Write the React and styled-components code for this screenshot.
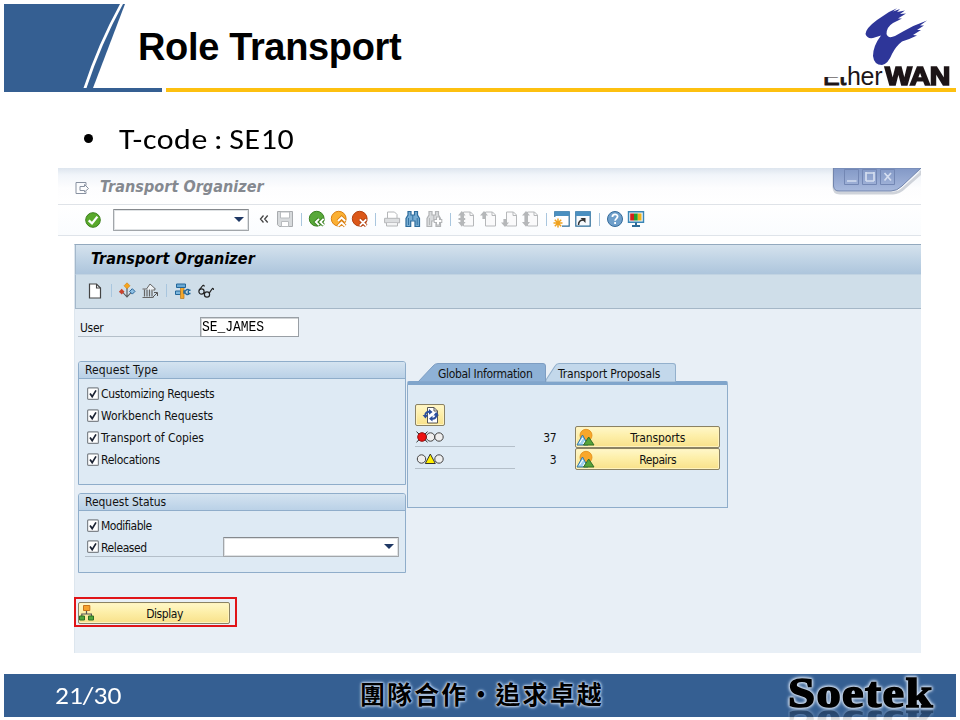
import React from "react";
import styled, { createGlobalStyle } from "styled-components";

const sans = `"DejaVu Sans Condensed", "DejaVu Sans", "Noto Sans", sans-serif`;

const Global = createGlobalStyle`
  * { box-sizing: border-box; }
  body { margin: 0; background: #fff; }
`;

/* ---------- slide ---------- */
const Slide = styled.main`
  width: 960px; height: 720px; overflow: hidden; background: #fff;
  display: flex; flex-direction: column; padding: 4px 4px 0;
`;
const Header = styled.header`
  height: 84px; display: flex; align-items: flex-start;
`;
const Corner = styled.svg`width: 122px; height: 84px; display: block; flex: none;`;
const Title = styled.h1`
  margin: 21px 0 0 12px; flex: 1; font: bold 38px/44px "Liberation Sans", Arial, sans-serif;
  letter-spacing: ${(p) => p.$ls}px; color: #000; white-space: nowrap;
`;
const Brand = styled.div`
  width: 135px; height: 84px; display: flex; flex-direction: column; overflow: visible;
`;
const Brush = styled.svg`width: 70px; height: 60px; margin: 1px 0 -1px 42px; display: block; flex: none;`;
const BrandName = styled.div`
  display: flex; height: 26px; margin-top: -1px; line-height: 26px; color: #1d1517; white-space: nowrap;
  font-family: "Liberation Sans", Arial, sans-serif; font-size: 25px;
`;
const BrandCut = styled.span`
  width: 24px; margin-left: 2px; clip-path: inset(14px 0 0 0); -webkit-text-stroke: 1.1px #1d1517;
  letter-spacing: -.4px;
`;
const BrandThin = styled.span`width: 38px; letter-spacing: -.3px;`;
const BrandHeavy = styled.span`
  font-weight: bold; letter-spacing: -.5px; -webkit-text-stroke: 1.6px #1d1517;
  transform: scaleX(1.14); transform-origin: left;
`;
const Rule = styled.div`
  height: 4px; display: grid; grid-template-columns: 158px 790px; gap: 4px; flex: none;
`;
const RuleBar = styled.div`background: ${(p) => p.$c};`;
const Bullet = styled.div`
  height: 76px; flex: none; display: flex; align-items: center; gap: 26px; padding: 17px 0 0 80px;
  font: 29px/34px Carlito, Lato, sans-serif; color: #000;
`;
const Dot = styled.i`width: 9px; height: 9px; border-radius: 50%; background: #000; margin-top: -1px;`;
const BulletText = styled.span`
  white-space: nowrap; letter-spacing: ${(p) => p.$ls}px; word-spacing: -1.4px; transform: scaleX(1.1); transform-origin: left;
`;

/* ---------- window ---------- */
const Win = styled.section`
  margin-left: 54px; width: 863px; height: 485px; flex: none; display: flex; flex-direction: column;
  background: #fff; font-family: ${sans}; font-size: 12px; color: #111;
`;
const TitleBar = styled.div`
  height: 37px; flex: none; display: flex; align-items: flex-start; border-bottom: 1px solid #dfe3e8;
  background: linear-gradient(#dde5ee 0, #f1f5fa 7px, #fdfdfe 20px, #fff);
`;
const MenuIcon = styled.svg`width: 16px; height: 14px; margin: 13px 0 0 16px;`;
const WinTitle = styled.div`
  flex: 1; margin: 9px 0 0 10px; font: italic bold 16px/20px "DejaVu Sans Condensed", sans-serif;
  letter-spacing: .05px; color: #858990; white-space: nowrap;
`;
const WinControls = styled.svg`width: 92px; height: 28px; flex: none; display: block;`;
const Toolbar = styled.div`
  height: 31px; flex: none; display: flex; align-items: center; padding: 0 0 1px 23px;
  border-bottom: 1px solid #dfe4ea; background: linear-gradient(#fff, #fafcfe);
`;
const Slot = styled.div`width: ${(p) => p.$w || 21.3}px; display: flex; justify-content: center; align-items: center;`;
const Sep = styled.i`width: 1px; height: 13px; margin: 0 4.8px; background: #a9c6de; flex: none;`;
const Icon = styled.svg`width: 18px; height: 18px; display: block; flex: none; overflow: visible;`;
const ToolIcons = styled.div`display: flex; align-items: center; padding-bottom: 1px;`;
const Combo = styled.div`
  width: ${(p) => p.$w}px; height: ${(p) => p.$h}px; border: 1px solid #a2a6aa; border-top-color: #85898d;
  box-shadow: inset 0 0 0 1px #dfe2e4;
  border-radius: 1px; background: #fff; display: flex; align-items: center; justify-content: flex-end; padding-right: 4px;
`;
const Arrow = styled.i`
  border: 5px solid transparent; border-top: 5px solid #1f3864; border-bottom: 0;
`;
const Inner = styled.div`
  margin: 8px 0 0 16px; flex: 1; display: flex; flex-direction: column;
  background: #e8eff6; border-top: 1px solid #93a9be; border-left: 1px solid #dde6ee;
`;
const InnerTitle = styled.div`
  height: 30px; flex: none; padding: 3px 0 0 15px; border-left: 1px solid #a4b8cb; border-bottom: 1px solid #c1d3e2;
  background: linear-gradient(#d5e2ed, #c2d5e6 45%, #adc5dc);
  font: italic bold 16px/22px "DejaVu Sans Condensed", sans-serif; letter-spacing: .06px; color: #000; white-space: nowrap;
`;
const AppBar = styled.div`
  height: 34px; flex: none; display: flex; align-items: center; padding: 0 0 2px 8px; background: #cfdee9;
  border-left: 1px solid #a4b8cb; border-bottom: 1px solid #a5b7c7;
`;
const Content = styled.div`flex: 1; padding-left: 3px; display: flex; flex-direction: column; align-items: flex-start;`;
const Line = styled.div`
  width: ${(p) => p.$w}px; border-bottom: 1px solid #b4bfc9; display: flex; align-items: center;
`;
const UserRow = styled.div`height: 20px; margin-top: 8px; display: flex;`;
const UserLabel = styled(Line)`padding: 2px 0 0 2px;`;
const Label = styled.span`white-space: nowrap; letter-spacing: ${(p) => p.$ls ?? -0.3}px; font-size: 12px; line-height: 16px;`;
const Field = styled.div`
  width: 99px; height: 20px; border: 1px solid #999fa5; box-shadow: inset 1px 1px 0 #d0d3d6; background: #fff;
  padding: 1px 0 0 1px; color: #000; white-space: nowrap;
`;
const FieldText = styled.span`
  display: block; font: 13px/17px "Liberation Mono", monospace; transform: scaleY(1.15); transform-origin: center 60%;
  letter-spacing: -.05px;
`;
const Columns = styled.div`
  margin-top: 24px; display: grid; grid-template-columns: 328px 321px; column-gap: 1px; height: 213px;
`;
const Stack = styled.div`display: flex; flex-direction: column; gap: 8px;`;
const Group = styled.div`
  height: ${(p) => p.$h}px; border: 1px solid #8fadca; border-radius: 3px 3px 0 0; background: #deeaf4;
`;
const GroupHead = styled.div`
  height: 17px; padding-left: 6px; border-bottom: 1px solid #8fadca; border-radius: 2px 2px 0 0;
  background: linear-gradient(#d4e3f0, #bad1e7); display: flex; align-items: center; margin-bottom: 3px;
`;
const CheckRow = styled.div`height: 22px; padding-left: 8px; display: flex; align-items: center; gap: 2px;`;
const CheckLabel = styled(Label)`padding-top: 2px;`;
const CheckBox = styled.svg`width: 12px; height: 13px; display: block; flex: none;`;
const CheckLine = styled(Line)`height: 20px; gap: 2px; padding: 1px 0 0 2px;`;
const RelRow = styled.div`height: 21px; padding-left: 6px; display: flex; align-items: center;`;
const TabPane = styled.div`margin-top: 2px; height: 145px; display: flex; flex-direction: column;`;
const Tabs = styled.div`height: 18px; display: flex; padding-left: 11px; flex: none;`;
const Tab = styled.div`
  width: ${(p) => p.$w}px; height: 18px; position: relative; padding-left: ${(p) => p.$pl}px;
  display: flex; align-items: center;
`;
const TabShape = styled.svg`position: absolute; left: 0; top: 0; width: 100%; height: 19px;`;
const TabText = styled(Label)`position: relative; padding-top: 3px;`;
const TabBody = styled.div`
  flex: 1; border: 1px solid #8fadca; border-top: 4px solid #80a5cb; border-radius: 2px 2px 0 0; background: #deeaf4;
  padding: 19px 7px 0 7px; display: flex; flex-direction: column;
`;
const YButton = styled.button`
  width: ${(p) => p.$w}px; height: 22px; padding: 0 0 0 1px; border: 1px solid #8a8264; border-radius: 2px; color: #111;
  background: linear-gradient(#fff7c9, #fdefa9 45%, #f8e18a); display: flex; align-items: center;
  box-shadow: inset 0 0 0 1px #fff3bd; font-family: ${sans};
`;
const BtnText = styled.span`
  flex: 1; text-align: center; font-size: 12px; letter-spacing: ${(p) => p.$ls ?? -0.3}px; padding: 2px 0 0 2px;
`;
const StatRow = styled.div`height: 22px; display: flex; align-items: center;`;
const StatLine = styled(Line)`height: 20px;`;
const Num = styled.span`width: 42px; text-align: right; margin-right: 18px; padding-top: 1px; font-size: 12px; letter-spacing: -.2px;`;
const Lights = styled.svg`width: 30px; height: 14px; display: block;`;
const RedBox = styled.div`
  margin: 23px 0 0 -4px; width: 163px; height: 30px; border: 2px solid #e01418; padding: 3px 0 0 2px;
`;

/* ---------- footer ---------- */
const Footer = styled.footer`
  margin-top: 21px; height: 43px; flex: none; width: 952px; background: #355f92; display: flex; align-items: flex-start;
`;
const PageNo = styled.div`width: 356px; padding: 5px 0 0 51px; font: 23.5px/34px Carlito, Lato, sans-serif; color: #fff;`;
const PageText = styled.span`display: inline-block; transform: scaleX(1.17); transform-origin: left;`;
const Motto = styled.div`
  width: 428px; padding-top: 2px; font: bold 25px/34px "Noto Sans CJK TC", sans-serif; color: #000; letter-spacing: 2.1px;
  text-shadow: 0 0 1px #b3c8e2, 0 0 2px #b3c8e2, 0 0 2px #b3c8e2, 0 0 3px #a6bddb, 0 0 3px #a6bddb, 0 0 4px #8ba9cf;
  white-space: nowrap;
`;
const Soetek = styled.div`
  height: 44px; flex: none; font: bold 43px/40px "Liberation Serif", serif; color: #000; white-space: nowrap;
`;
const SoetekText = styled.div`
  height: 38px; line-height: 37px; -webkit-text-stroke: 1.6px #000; letter-spacing: 1.2px;
  transform: scaleX(${(p) => p.$sx}); transform-origin: left;
  filter: drop-shadow(0 0 1px #d3e0f0) drop-shadow(0 0 1px #c6d6ea) drop-shadow(0 0 1.5px #b4c8e1);
  -webkit-box-reflect: below -6px linear-gradient(transparent 50%, rgba(0, 0, 0, .4));
`;

/* ---------- icons ---------- */
const Ok = () => (
  <Icon viewBox="0 0 18 18"><circle cx="9" cy="9" r="7.3" fill="#59a92b" stroke="#3c7f1c" />
    <path d="M4.7 9.3 8 12.4 13.4 5.6" fill="none" stroke="#fff" strokeWidth="2.3" /></Icon>
);
const Chevrons = () => (
  <Icon viewBox="0 0 18 18"><path d="M7.500 5.500 4.500 9l3 3.500M11.700 5.500 8.700 9l3 3.500" fill="none" stroke="#444" strokeWidth="1.300" /></Icon>
);
const Save = () => (
  <Icon viewBox="0 0 18 18"><path d="M1.500 1.500h15v15H3.300L1.500 14.700z" fill="#d7dadc" stroke="#a8abae" />
    <path d="M4.500 2h9v6h-9zM5.500 11.500h7v5h-7z" fill="#fff" stroke="#b9bcbf" /></Icon>
);
const discMarks = {
  back: "M11 8.800 7.800 12l3.200 3.200M15.600 8.800 12.400 12l3.200 3.200",
  up: "m8 11 3.600-3.500L15.200 11M8 16l3.600-3.500L15.200 16",
  x: "m8.800 9.300 6.400 6.400m0-6.400-6.400 6.400",
};
const Disc = ({ fill, edge, kind }) => (
  <Icon viewBox="0 0 18 18"><circle cx="8.700" cy="8.700" r="7.400" fill={fill} stroke={edge} />
    <path d={discMarks[kind]} fill="none" stroke={edge} strokeWidth="3.600" />
    <path d={discMarks[kind]} fill="none" stroke="#fff" strokeWidth="1.900" /></Icon>
);
const Print = () => (
  <Icon viewBox="0 0 18 18"><path d="M4.500 8V2h7l2.500 2.500V8" fill="#fff" stroke="#b4b6b8" />
    <path d="M1.600 8.300h15v4.500h-15z" fill="#dcdee0" stroke="#b4b6b8" /><path d="M3.500 13v3h11v-3" fill="#f2f3f4" stroke="#b4b6b8" /></Icon>
);
const Binoc = ({ c, f, plus }) => (
  <Icon viewBox="0 0 18 18"><path d="M4 1.500h3V5h3.500V1.500h3V5l2 3.500v8H11v-5.500H6.700v5.500H2v-8L4 5z" fill={f} stroke={c} strokeWidth="1.200" />
    <path d="M4.500 8v7M13.200 8v7M8.800 5v5" stroke={c} strokeWidth=".9" />
    {plus && <path d="M13 6.500v9M8.700 11h8.600" stroke={c} strokeWidth="4" />}
    {plus && <path d="M13 7.500v7M9.700 11h6.600" stroke="#fff" strokeWidth="2" />}</Icon>
);
const PageIcon = ({ kind }) => (
  <Icon viewBox="0 0 18 18"><path d="M6.500 2h7l3 3v11h-10z" fill="#fafafb" stroke="#b6b8ba" /><path d="M13 2v3.500h3.500" fill="none" stroke="#b6b8ba" />
    {kind === "first" && <path d="M4.800 1 1 5.600h2.400V8H1.500v2h1.900v2H1l3.800 4.800L8.600 12H6.200v-2h2V8h-2V5.600h2.400z" fill="#b5b7b9" />}
    {kind === "prev" && <path d="M5 1 1 5.600h2.400V9h3.200V5.600H9z" fill="#b5b7b9" />}
    {kind === "next" && <path d="M5 17 1 12.400h2.400V9h3.200v3.400H9z" fill="#b5b7b9" />}
    {kind === "last" && <path d="M5 1 1 5.600h2.400V12H1l4 4.800L9 12H6.600V5.600H9z" fill="#b5b7b9" />}
  </Icon>
);
const WinNew = () => (
  <Icon viewBox="0 0 18 18"><path d="M1.800 1.800h14.400v14.400H1.800z" fill="#fff" stroke="#2d6c98" strokeWidth="1.200" /><path d="M1.500 1.500h15V6h-15z" fill="#4a8fc0" />
    <path d="M1 7h8v11H1z" fill="#fbfcfe" /><path d="M5 8.500v9M.5 13h9M1.800 9.800l6.400 6.400M8.200 9.800l-6.400 6.400" stroke="#f0a21e" strokeWidth="1.500" /></Icon>
);
const WinShort = () => (
  <Icon viewBox="0 0 18 18"><path d="M1.800 1.800h14.400v14.400H1.800z" fill="#f7fafd" stroke="#2d6c98" strokeWidth="1.200" /><path d="M1.500 1.500h15V6h-15z" fill="#4a8fc0" />
    <path d="M4.500 15c0-3.500 1.500-5 5-5" fill="none" stroke="#333" strokeWidth="1.500" /><path d="M6.500 8h5v5z" fill="#333" /></Icon>
);
const Help = () => (
  <Icon viewBox="0 0 18 18"><circle cx="9" cy="9" r="7.500" fill="#6f9fca" stroke="#356b9a" />
    <path d="M6.400 7c0-3.500 5.200-3.500 5.200-.4 0 2-2.500 2-2.500 4.200M9.100 12v2" fill="none" stroke="#fff" strokeWidth="1.800" /></Icon>
);
const Monitor = () => (
  <Icon viewBox="0 0 18 18"><path d="M1.500 1.800h15v10.400h-15z" fill="#e8f3fa" stroke="#3a86b5" strokeWidth="1.400" />
    <path d="M3.200 3.500H7v7H3.200z" fill="#d2201c" /><path d="M7 3.500h3.800v7H7z" fill="#22a02c" /><path d="M10.800 3.500h3.700v7h-3.700z" fill="#f0b21a" />
    <path d="M9 12.500V15M5 16h8" stroke="#2d6c98" strokeWidth="2" /></Icon>
);
const NewDoc = () => (
  <Icon viewBox="0 0 18 18"><path d="M3.500 2h7l4 4v10h-11z" fill="#fff" stroke="#444" strokeWidth="1.200" /><path d="M10.500 2v4h4" fill="none" stroke="#444" strokeWidth="1.100" /></Icon>
);
const Route = () => (
  <Icon viewBox="0 0 18 18"><path d="M9 6v9M4 9.500l5 5.500 4.500-5" fill="none" stroke="#555" strokeWidth="1.100" />
    <path d="m9 .8 3 3-3 3-3-3z" fill="#f6a51d" stroke="#cf7d10" strokeWidth=".6" /><path d="M3.700 6.800 6.500 9.700l-2.800 2.800L.9 9.700z" fill="#c9432c" />
    <path d="m14.300 6.700 2.700 2.700-2.700 2.700-2.700-2.700z" fill="#8fc0e4" stroke="#28669a" /></Icon>
);
const Bank = () => (
  <Icon viewBox="0 0 18 18"><path d="M1.500 7h4L9 2l5.500 5H13v2" fill="#eef2f5" stroke="#666" />
    <path d="M3.500 7.500v7M6 7.500v7M8.500 7.500v7M11 7.500v7M1.500 15.500h11" stroke="#666" strokeWidth="1.200" /><path d="m12 15 4-4M13 10.500h3.500V14" fill="none" stroke="#555" /></Icon>
);
const Tools = () => (
  <Icon viewBox="0 0 18 18"><path d="M1.500 9h5v3.500h-5z" fill="#7db7dd" stroke="#23679a" />
    <path d="M6.500 2.500H10v14H6.500z" fill="#f3a72c" stroke="#b9771a" strokeWidth=".7" />
    <path d="M2.500 2h9v3.500h-9z" fill="#6aa9d3" stroke="#23679a" /><path d="M16.500 8.300h-2.200v3.200h2.200M15 7.700c-2-.8-3 0-3.500 1.300H10v2h1.500c.5 1.600 2 2 3.500 1.200" fill="none" stroke="#23679a" strokeWidth="1.400" /></Icon>
);
const Glasses = () => (
  <Icon viewBox="0 0 18 18"><g fill="none" stroke="#222" strokeWidth="1.200"><circle cx="4.500" cy="9.500" r="2.600" /><circle cx="10" cy="12.500" r="2.600" />
    <path d="m6.900 10.600 1 .6M2.300 8.200 5.300 4c.8-1.200 2.200-.6 1.800.6M12.200 11.200 15 7c.6-1 1.700-.4 1.400.9" /></g></Icon>
);
const Scenery = () => (
  <Icon viewBox="0 0 18 18"><circle cx="9" cy="7.300" r="6" fill="#f8a72b" stroke="#e18b15" strokeWidth=".8" />
    <path d="M0 17 5.500 7 11 17z" fill="#9ed0ef" stroke="#2e77a8" /><path d="m2.500 15 3.300-5M6 16l2-3" stroke="#fff" />
    <path d="m6.500 17 5.200-8L17 17z" fill="#55a33b" stroke="#336f27" /></Icon>
);
const Tree = () => (
  <Icon viewBox="1 0 18 18"><path d="M7.500 6v4M2.800 13v-3h9.600v3" fill="none" stroke="#555" strokeWidth="1.200" />
    <path d="M4.500 1.500h6.300v5H4.500z" fill="#f6a12c" stroke="#c9741a" /><path d="M.5 12h5v4H.5zM9.500 12h5v4h-5z" fill="#4fa53a" stroke="#2f6f22" /></Icon>
);
const Refresh = () => (
  <Icon viewBox="0 0 18 18"><path d="M5.500 1.500h6.500l3.500 3.500v12h-10z" fill="#fff" stroke="#555" /><path d="M12 1.500V5h3.500" fill="none" stroke="#555" />
    <path d="M3.300 10C3 7.200 4.800 5.600 7.500 5.800M14.200 8.500c.3 2.800-1.500 4.400-4.200 4.200" fill="none" stroke="#2a4f9e" strokeWidth="1.900" />
    <path d="M.6 9h5.600l-2.800 3.600zM17 9.500h-5.600l2.800-3.600zM7 3l3.600 2.900L7 8.700zM10.500 9.800v5.700L7 12.700z" fill="#2a4f9e" /></Icon>
);
const Box = () => (
  <CheckBox viewBox="0 0 12 13"><rect x=".6" y=".9" width="10.800" height="11.500" rx="1" fill="#fff" stroke="#7f858b" strokeWidth="1.200" />
    <path d="M3 6.400 5.200 9.600 9 3.400" fill="none" stroke="#1b2333" strokeWidth="1.700" /></CheckBox>
);

const requestTypes = [
  ["Customizing Requests", -0.32], ["Workbench Requests", -0.06], ["Transport of Copies", -0.06], ["Relocations", -0.3],
];

export default function App() {
  return (
    <Slide>
      <Global />
      <Header>
        <Corner viewBox="0 0 122 84">
          <path d="M0 0H116Q94 40 79.500 84H0z" fill="#355f92" />
          <path d="M121 0 89 84H82.500Q97 40 119 0z" fill="#355f92" />
        </Corner>
        <Title $ls={-0.35}>Role Transport</Title>
        <Brand>
          <Brush viewBox="863 5 70 60">
            <path d="M897 8.300 889 12 877 20Q866 28 865.500 34Q867 39 873 38L881 35.500Q873 46 873 56Q874 65 882 65Q888 64 892 54Q896 46 902 41.500Q910 39 917 35.500L913 35 921 30 917 30 924 25.500 920 25.500 927 20.500Q914 25 903 31.500L895 36Q888 39 886.500 34Q886.500 27 893 23L902 18.500 898 18.500 906 13.500 900 14 905 10.500 897 12 900 9 893 11.500z" fill="#2e3699" />
          </Brush>
          <BrandName><BrandCut>Et</BrandCut><BrandThin>her</BrandThin><BrandHeavy>WAN</BrandHeavy></BrandName>
        </Brand>
      </Header>
      <Rule><RuleBar $c="#355f92" /><RuleBar $c="#fdc010" /></Rule>
      <Bullet><Dot /><BulletText $ls={0.5}>T-code : SE10</BulletText></Bullet>

      <Win>
        <TitleBar>
          <MenuIcon viewBox="0 0 16 14"><path d="M12 4.500V1.500H2v11h10V10.500M6 5.500h4.500V3.500L14.500 7.500l-4 3.500V9.500H6z" fill="none" stroke="#8891a0" /></MenuIcon>
          <WinTitle>Transport Organizer</WinTitle>
          <WinControls viewBox="0 0 92 28">
            <defs><linearGradient id="wc" x2="0" y2="1"><stop stopColor="#8298c6" /><stop offset="1" stopColor="#a8b9dd" /></linearGradient></defs>
            <path d="M5 0V19Q5 25 11 25H64Q70 25 75 20L92 5V3" fill="none" stroke="#cfd3da" strokeWidth="3" />
            <path d="M4.500 0V18Q5 23 10 23H62Q68 23 73 18L92 0z" fill="url(#wc)" stroke="#7285ad" />
            <path d="M15.500 1.500h14v15h-14zM33.500 1.500h14v15h-14zM51.500 1.500h14v15h-14z" fill="none" stroke="#7387b4" />
            <path d="M18 13h9.500M37 5h8M37 13h8M37 4v9M45 4v9M55.500 5l6.500 7.500M62 5l-6.500 7.500" stroke="#d5def0" strokeWidth="1.700" />
          </WinControls>
        </TitleBar>
        <Toolbar>
          <Slot $w={23}><Ok /></Slot>
          <Slot $w={153}><Combo $w={136} $h={22}><Arrow /></Combo></Slot>
          <ToolIcons>
            <Slot $w={16}><Chevrons /></Slot>
            <Slot $w={23}><Save /></Slot>
            <Sep />
            <Slot><Disc kind="back" fill="#58a839" edge="#38801f" /></Slot>
            <Slot><Disc kind="up" fill="#fbb033" edge="#d97f12" /></Slot>
            <Slot><Disc kind="x" fill="#db5718" edge="#b2400f" /></Slot>
            <Sep />
            <Slot><Print /></Slot>
            <Slot><Binoc c="#2c6b9b" f="#76acd3" /></Slot>
            <Slot><Binoc c="#b2b4b6" f="#d9dbdd" plus /></Slot>
            <Sep />
            {["first", "prev", "next", "last"].map((k) => <Slot key={k}><PageIcon kind={k} /></Slot>)}
            <Sep />
            <Slot><WinNew /></Slot>
            <Slot><WinShort /></Slot>
            <Sep />
            <Slot><Help /></Slot>
            <Slot><Monitor /></Slot>
          </ToolIcons>
        </Toolbar>
        <Inner>
          <InnerTitle>Transport Organizer</InnerTitle>
          <AppBar>
            <Slot $w={22}><NewDoc /></Slot><Sep />
            <Slot $w={21}><Route /></Slot><Slot $w={24}><Bank /></Slot><Sep />
            <Slot $w={21}><Tools /></Slot><Slot $w={25}><Glasses /></Slot>
          </AppBar>
          <Content>
            <UserRow>
              <UserLabel $w={122}><Label>User</Label></UserLabel>
              <Field><FieldText>SE_JAMES</FieldText></Field>
            </UserRow>
            <Columns>
              <Stack>
                <Group $h={124}>
                  <GroupHead><Label $ls={0.1}>Request Type</Label></GroupHead>
                  {requestTypes.map(([t, ls]) => <CheckRow key={t}><Box /><CheckLabel $ls={ls}>{t}</CheckLabel></CheckRow>)}
                </Group>
                <Group $h={80}>
                  <GroupHead><Label $ls={-0.03}>Request Status</Label></GroupHead>
                  <CheckRow><Box /><CheckLabel $ls={-0.5}>Modifiable</CheckLabel></CheckRow>
                  <RelRow><CheckLine $w={138}><Box /><CheckLabel $ls={-0.4}>Released</CheckLabel></CheckLine><Combo $w={176} $h={20}><Arrow /></Combo></RelRow>
                </Group>
              </Stack>
              <TabPane>
                <Tabs>
                  <Tab $w={128} $pl={20}>
                    <TabShape viewBox="0 0 128 19" preserveAspectRatio="none"><path d="M0 19 15 3Q17 .5 20 .5H125Q127.500.5 127.500 3V19z" fill="#8eb1d6" stroke="#7d9dc2" /></TabShape>
                    <TabText $ls={-0.33}>Global Information</TabText>
                  </Tab>
                  <Tab $w={130} $pl={12}>
                    <TabShape viewBox="0 0 129 19" preserveAspectRatio="none"><path d="M0 17 9 3Q10.500.5 13 .5H126Q128.500.5 128.500 3V19H0z" fill="#c3d8eb" stroke="#93b0cc" /></TabShape>
                    <TabText $ls={-0.16}>Transport Proposals</TabText>
                  </Tab>
                </Tabs>
                <TabBody>
                  <YButton $w={30}><Slot $w={27}><Refresh /></Slot></YButton>
                  <StatRow>
                    <StatLine $w={100}>
                      <Lights viewBox="0 0 30 14"><circle cx="15.500" cy="7" r="4.200" fill="#eee" stroke="#444" /><circle cx="24" cy="7" r="4.200" fill="#eee" stroke="#444" />
                        <path d="m1.500 1.700 11 10.500m0-10.500-11 10.500" stroke="#222" /><circle cx="7" cy="7" r="4.300" fill="#ee1111" stroke="#8f1010" /></Lights>
                    </StatLine>
                    <Num>37</Num>
                    <YButton $w={146}><Scenery /><BtnText $ls={-0.12}>Transports</BtnText></YButton>
                  </StatRow>
                  <StatRow>
                    <StatLine $w={100}>
                      <Lights viewBox="0 0 30 14"><circle cx="6.500" cy="7" r="4.200" fill="#eee" stroke="#444" /><circle cx="24" cy="7" r="4.200" fill="#eee" stroke="#444" />
                        <path d="m15.300 2 5 9.500h-10z" fill="#ffee00" stroke="#333" /></Lights>
                    </StatLine>
                    <Num>3</Num>
                    <YButton $w={146}><Scenery /><BtnText $ls={-0.45}>Repairs</BtnText></YButton>
                  </StatRow>
                </TabBody>
              </TabPane>
            </Columns>
            <RedBox><YButton $w={152}><Tree /><BtnText $ls={-0.45}>Display</BtnText></YButton></RedBox>
          </Content>
        </Inner>
      </Win>

      <Footer>
        <PageNo><PageText>21/30</PageText></PageNo>
        <Motto>團隊合作・追求卓越</Motto>
        <Soetek><SoetekText $sx={1.13}>Soetek</SoetekText></Soetek>
      </Footer>
    </Slide>
  );
}
